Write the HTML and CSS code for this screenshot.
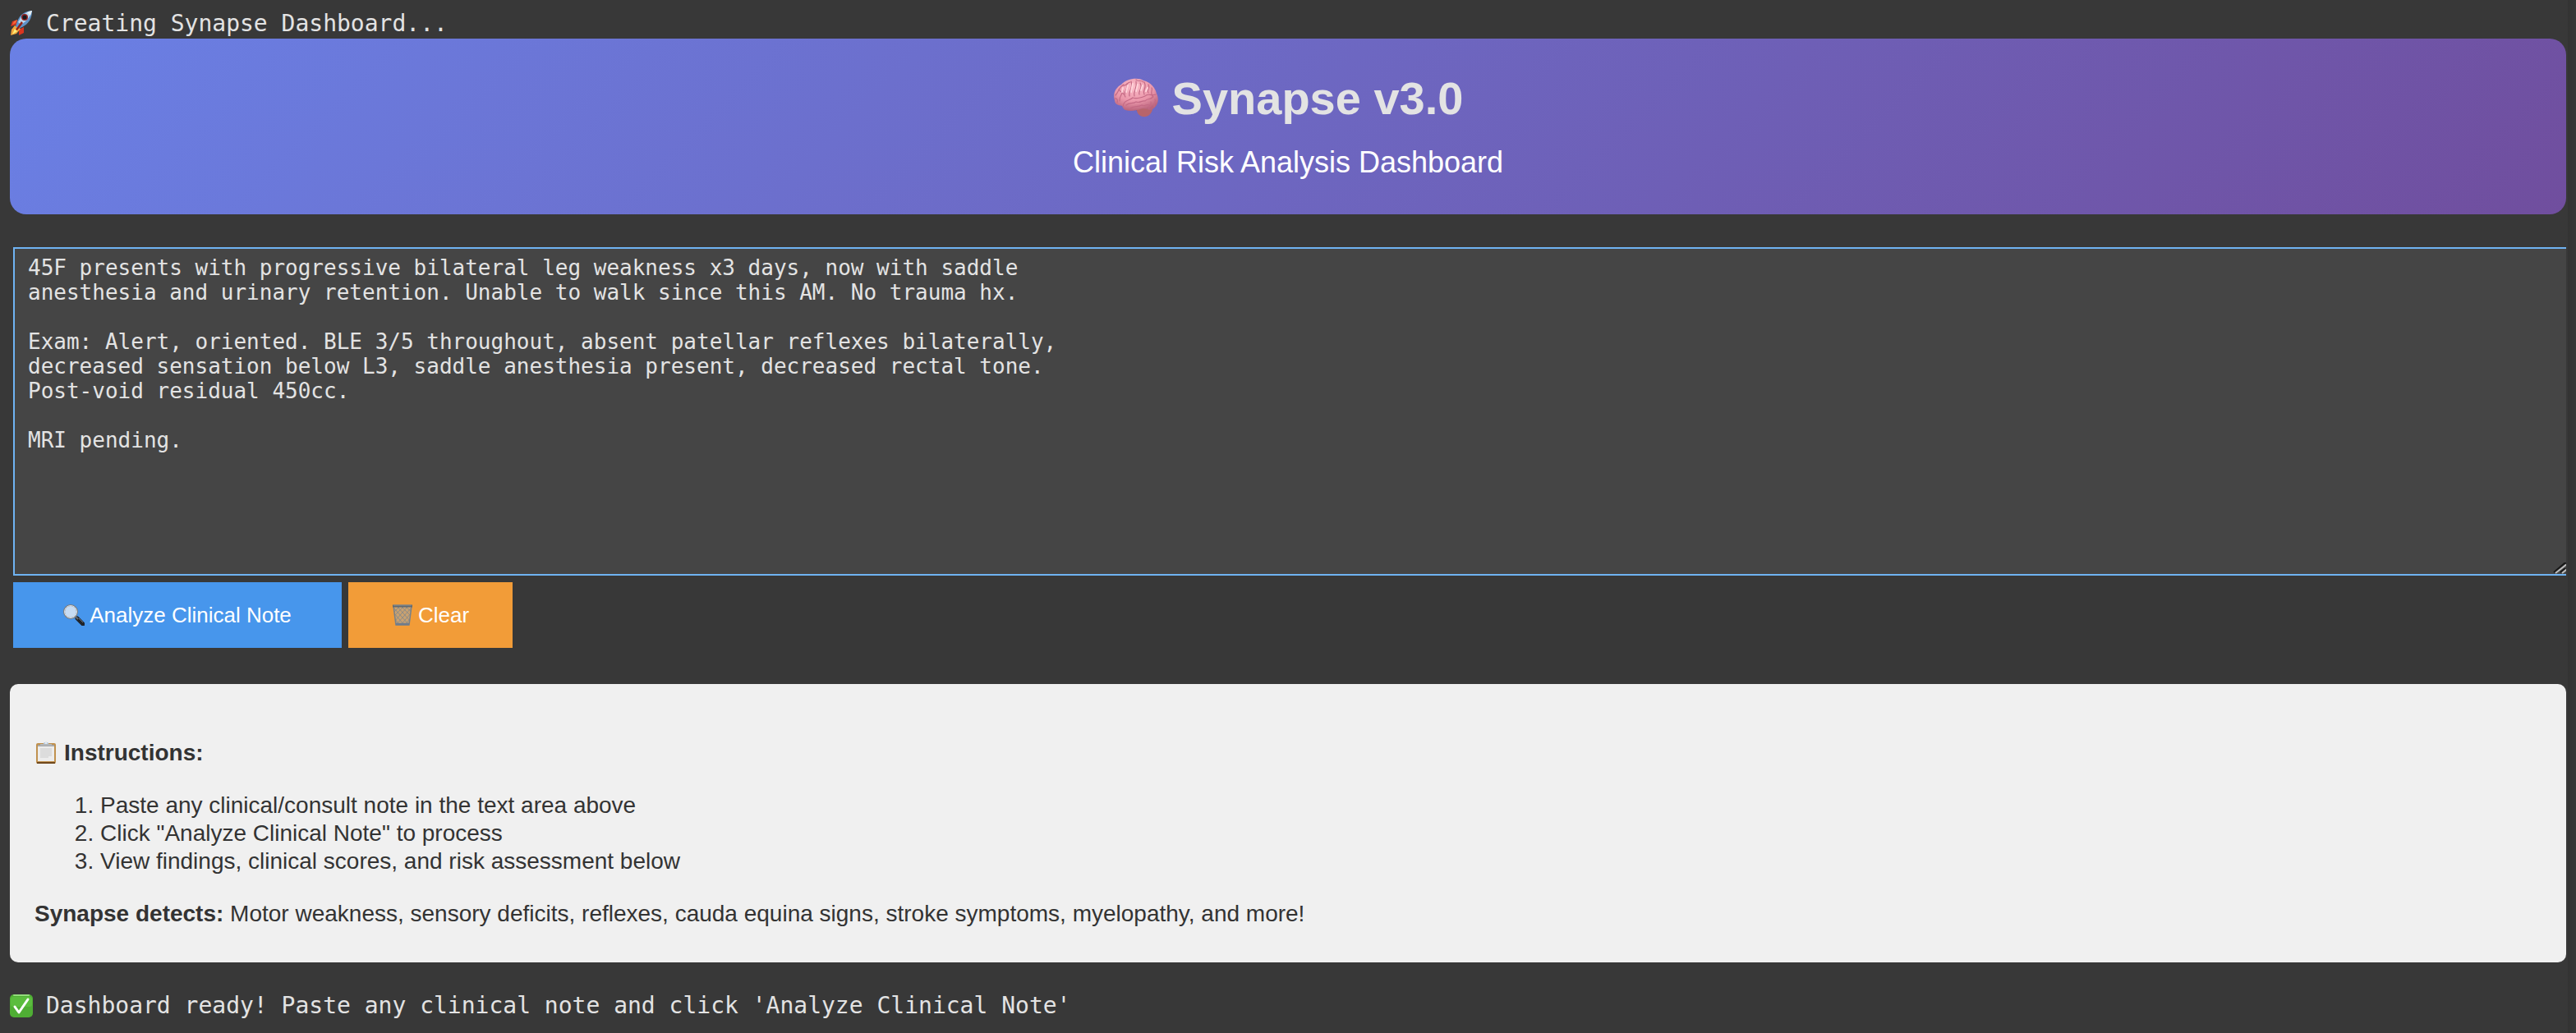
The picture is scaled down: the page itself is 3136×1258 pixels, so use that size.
FILE: index.html
```html
<!DOCTYPE html>
<html lang="en">
<head>
<meta charset="utf-8">
<meta name="viewport" content="width=device-width, initial-scale=1">
<title>Synapse v3.0</title>
<link rel="stylesheet" href="styles.css">
</head>
<body>
<main class="output">
  <p class="log">
    <svg class="log-icon" viewBox="0 0 28 34" aria-hidden="true">
      <path d="M9 12 3 14 1 20 8 18zM17 21 17 28 11 31 11 24z" fill="#d9351f"/>
      <path d="M9 12 5 14 3 18 7 16z" fill="#f36a3c"/>
      <path d="M6 19 2 24 1 31 8 29 13 23z" fill="#f3a73b"/>
      <path d="M6 23 3 30 9 26z" fill="#fff07a"/>
      <path d="M27 1C19 1 12 6 9 14L7 20 10 23 15 21C23 17 27 10 27 1z" fill="#5f93c9"/>
      <path d="M27 1C20 2 14 7 10 15L14 18C21 13 25 8 27 1z" fill="#bcd8ee"/>
      <path d="M27 1 21 3 25 7z" fill="#e9eef2"/>
      <circle cx="18" cy="9" r="4" fill="#8f2020"/>
      <circle cx="18" cy="9" r="2.5" fill="#151a20"/>
      <path d="M14 14 7 24 9 25 16 16z" fill="#942218"/>
    </svg>
    <span>Creating Synapse Dashboard...</span>
  </p>

  <header class="banner">
    <h1 class="banner-title">
      <svg class="brain-icon" viewBox="0 0 56 50" aria-hidden="true">
        <defs>
          <radialGradient id="brainFill" cx="45%" cy="25%" r="75%">
            <stop offset="0" stop-color="#fbbcc8"/>
            <stop offset=".6" stop-color="#ea96aa"/>
            <stop offset="1" stop-color="#b9647c"/>
          </radialGradient>
        </defs>
        <path d="M14 33C18 42 29 37 33 41L38 38 25 33z" fill="#5b2b30"/>
        <path d="M29 39C32 35 44 33 48 38 47 44 42 48 36 47 32 46 29 43 29 39z" fill="#b8646b"/>
        <path d="M2 27C-1 19 4 11 10 8 17 0 31-1 37 3 46 5 52 13 53 19 57 27 54 34 48 38 44 40 40 37 36 37 28 40 21 41 15 39 12 38 13 36 11 34 6 33 2 32 2 27z" fill="url(#brainFill)"/>
        <g fill="none" stroke="#c46a85" stroke-width="1.2" stroke-linecap="round">
          <path d="M3 21C8 15 7 11 13 8M8 28C7 22 12 20 12 15M15 23C11 17 19 14 17 7M20 22C18 16 25 13 22 4M26 22C24 16 30 14 28 4M32 20C30 16 37 13 33 6M38 20C35 14 42 13 38 5M43 18C40 14 46 13 43 8M49 23C44 18 49 15 47 12"/>
          <path d="M2 25C5 24 6 27 5 30M12 35C13 26 20 28 24 24 29 26 34 24 39 22 42 18 46 22 52 20"/>
          <path d="M16 33C20 29 24 32 28 29 33 31 35 27 39 28 42 24 47 27 48 23M21 37C26 33 30 36 35 33 39 35 41 31 44 33M44 38C42 34 48 34 46 29M50 35C49 30 53 29 51 26"/>
          <path d="M28 2C30 5 35 2 37 5M12 9C17 10 17 5 21 5M7 14C9 18 12 16 13 20"/>
        </g>
        <path d="M12 12 11 17M18 9 16 17M24 7 22 17M30 8 28 16M36 9 34 15M42 12 40 16" stroke="#ffd3da" stroke-width="2" stroke-linecap="round"/>
      </svg>
      <span>Synapse v3.0</span>
    </h1>
    <p class="banner-subtitle">Clinical Risk Analysis Dashboard</p>
  </header>

  <form class="note-form">
    <div class="note-field">
      <textarea class="note-input" aria-label="Clinical note" spellcheck="false">45F presents with progressive bilateral leg weakness x3 days, now with saddle
anesthesia and urinary retention. Unable to walk since this AM. No trauma hx.

Exam: Alert, oriented. BLE 3/5 throughout, absent patellar reflexes bilaterally,
decreased sensation below L3, saddle anesthesia present, decreased rectal tone.
Post-void residual 450cc.

MRI pending.</textarea>
      <svg class="resize-grip" viewBox="0 0 16 14" aria-hidden="true">
        <g fill="none" stroke-width="2">
          <path d="M1 12 14 1H17M9 12 14 8H17" stroke="#181818"/>
          <path d="M3 13 17 2M11 13 17 8" stroke="#bdbdbd"/>
        </g>
      </svg>
    </div>
    <div class="actions">
      <button class="button button-analyze" type="button">
        <svg class="button-icon" viewBox="0 0 26 26" aria-hidden="true">
          <path d="M17 17 24 24" stroke="#20242a" stroke-width="5" stroke-linecap="round"/>
          <path d="M14 14 18 18" stroke="#60676d" stroke-width="2"/>
          <path d="M19 17 24 22" stroke="#73777b" stroke-width="1"/>
          <circle cx="9" cy="9" r="8" fill="#c7dcf3" stroke="#777b80" stroke-width="2"/>
          <circle cx="9" cy="9" r="7.5" fill="none" stroke="#d9dde0" stroke-width="1"/>
        </svg>
        <span>Analyze Clinical Note</span>
      </button>
      <button class="button button-clear" type="button">
        <svg class="button-icon" viewBox="0 0 26 26" aria-hidden="true">
          <path d="M2 2H24L21 25H5z" fill="#c9a170"/>
          <path d="M3 5 20 24M7 3 22 20M12 3 23 14M17 3 24 9M3 11 15 25M4 18 9 25M23 5 6 24M19 3 4 20M14 3 3 14M9 3 3 9M23 11 11 25M22 18 16 25" stroke="#8c8c88" stroke-width="1"/>
          <path d="M2 2 5 25H21L24 2" fill="none" stroke="#798087" stroke-width="1.5"/>
          <path d="M1 2H25" stroke="#62696f" stroke-width="3"/>
          <path d="M2 1H24" stroke="#8e9599" stroke-width="1"/>
          <path d="M5 24H21" stroke="#707c8b" stroke-width="2.5"/>
        </svg>
        <span>Clear</span>
      </button>
    </div>
  </form>

  <section class="instructions">
    <p class="instructions-title">
      <svg class="clipboard-icon" viewBox="0 0 24 28" aria-hidden="true">
        <rect y="2" width="24" height="25" rx="2" fill="#c0914e"/>
        <path d="M1 26H23" stroke="#70491d" stroke-width="2"/>
        <path d="M2 5H22V24H2z" fill="#ececec"/>
        <path d="M5 9H19M5 11H19M5 13H19M5 15H19M5 17H19M5 19H15" stroke="#cccccc" stroke-width="1"/>
        <path d="M2 4H22V6H2z" fill="#a5a8ab"/>
        <path d="M5 3H9C9 0 15 0 15 3H19V5H5z" fill="#b4b7ba"/>
        <path d="M9 3C9 0 15 0 15 3z" fill="#b9d0e5"/>
        <circle cx="12" cy="2" r="1" fill="#f5f5f5"/>
      </svg>
      <strong>Instructions:</strong>
    </p>
    <ol class="steps">
      <li>Paste any clinical/consult note in the text area above</li>
      <li>Click "Analyze Clinical Note" to process</li>
      <li>View findings, clinical scores, and risk assessment below</li>
    </ol>
    <p class="detects"><strong>Synapse detects:</strong> Motor weakness, sensory deficits, reflexes, cauda equina signs, stroke symptoms, myelopathy, and more!</p>
  </section>

  <p class="log log-ready">
    <svg class="log-icon" viewBox="0 0 28 34" aria-hidden="true">
      <rect y="3" width="28" height="28" rx="5" fill="#4fae34"/>
      <path d="M5 4H23" stroke="#93dc7b" stroke-width="2" stroke-linecap="round"/>
      <rect x="1" y="6" width="26" height="12" rx="3" fill="#5bbd3e"/>
      <path d="M6 18 11 25 22 9" fill="none" stroke="#fff" stroke-width="3" stroke-linecap="round" stroke-linejoin="round"/>
    </svg>
    <span>Dashboard ready! Paste any clinical note and click 'Analyze Clinical Note'</span>
  </p>
</main>
</body>
</html>
```
FILE: styles.css
```css
:root {
  --page: #383838;
  --text: #e3e3e3;
  --sans: "Liberation Sans", Arial, Helvetica, sans-serif;
  --mono: "DejaVu Sans Mono", Menlo, monospace;
}

* {
  box-sizing: border-box;
}

body {
  margin: 0;
  min-height: 100vh;
  /* the strip at the right edge is the scroll gutter */
  background: linear-gradient(to right, #333333, #383836) right / 10px 100% no-repeat var(--page);
  color: var(--text);
  font-family: var(--sans);
  font-size: 28px;
}

p,
h1 {
  margin: 0;
}

svg {
  display: block;
  flex: none;
}

.output {
  display: flex;
  flex-direction: column;
  padding: 11px 12px 15px;
}

.log {
  display: flex;
  align-items: center;
  gap: 16px;
  font-family: var(--mono);
  line-height: 36px;
}

.log-icon {
  width: 28px;
  height: 34px;
}

.log-ready {
  margin-top: 35px;
}

.banner {
  display: flex;
  flex-direction: column;
  align-items: center;
  gap: 23px;
  padding: 39px 40px 42px;
  border-radius: 20px;
  background: linear-gradient(135deg, #6a80e5 0%, #704e9e 100%);
}

.banner-title {
  display: flex;
  align-items: center;
  gap: 16px;
  font-size: 56px;
  line-height: 68px;
}

.brain-icon {
  width: 56px;
  height: 50px;
}

.banner-subtitle {
  color: #ffffff;
  font-size: 36px;
  line-height: 42px;
}

.note-form {
  display: flex;
  flex-direction: column;
  gap: 8px;
  margin: 40px 0 44px;
  padding-left: 4px;
}

.note-field {
  position: relative;
  overflow: hidden;
}

.note-input {
  display: block;
  width: calc(100% + 4px);
  height: 400px;
  padding: 8px 16px;
  border: 2px solid #6fb3f2;
  border-radius: 0;
  outline: none;
  background: #454545;
  color: var(--text);
  font-family: var(--mono);
  font-size: 26px;
  line-height: 30px;
  resize: none;
}

.resize-grip {
  position: absolute;
  right: 0;
  bottom: 2px;
  width: 16px;
  height: 14px;
}

.actions {
  display: flex;
  gap: 8px;
}

.button {
  display: flex;
  align-items: center;
  justify-content: center;
  gap: 6px;
  width: 200px;
  height: 80px;
  padding: 0;
  border: 0;
  color: #ffffff;
  font-family: var(--sans);
  font-size: 26px;
  line-height: 30px;
}

.button-analyze {
  width: 400px;
  background: #4796ec;
}

.button-clear {
  background: #f29c38;
}

.button-icon {
  width: 26px;
  height: 26px;
}

.instructions {
  display: flex;
  flex-direction: column;
  gap: 30px;
  padding: 67px 30px 42px;
  border-radius: 10px;
  background: #f0f0f0;
  color: #333333;
  line-height: 34px;
}

.instructions-title {
  display: flex;
  align-items: center;
  gap: 10px;
  padding-left: 2px;
}

.clipboard-icon {
  width: 24px;
  height: 28px;
}

.steps {
  margin: 0;
  padding-left: 80px;
}
```
